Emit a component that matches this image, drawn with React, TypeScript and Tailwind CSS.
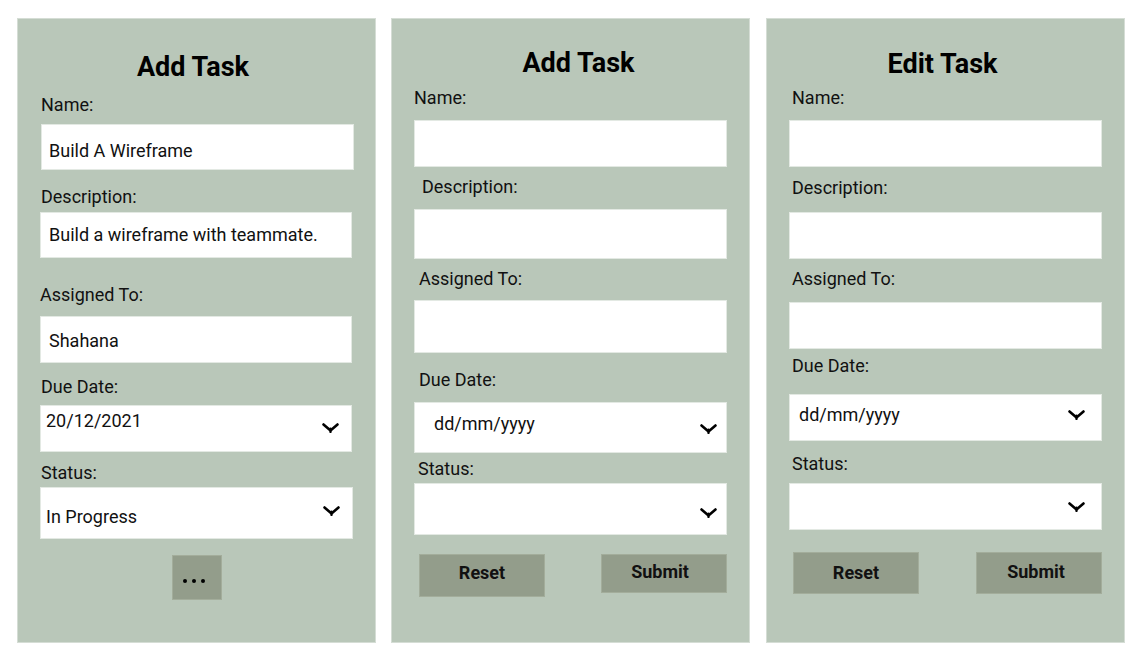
import React from 'react';

const Chevron: React.FC<{ className?: string }> = ({ className = '' }) => (
  <svg width="17" height="10" viewBox="0 0 17 10" className={className}>
    <path d="M1.5 1.5 L8.5 7.5 L15.5 1.5" fill="none" stroke="#000" strokeWidth="2.6" strokeLinecap="round" strokeLinejoin="round" />
    <path d="M8.5 5.5 L8.5 9" stroke="#000" strokeWidth="2.2" strokeLinecap="round" />
  </svg>
);

const Label: React.FC<{ text: string; className?: string }> = ({ text, className = '' }) => (
  <div className={`h-[20px] text-[18px] leading-[20px] text-[#111] ${className}`}>{text}</div>
);

const field = 'bg-white outline-1 -outline-offset-1 outline-[#e3e9e3] text-[18px] leading-[20px] text-[#111]';
const btn = 'bg-[#939d8b] outline-1 -outline-offset-1 outline-[#a3ad9b] text-center text-[18px] leading-[20px] font-bold text-[#111]';
const panel = 'w-[359px] h-[625px] bg-[#b9c7b9] outline-1 -outline-offset-1 outline-[#d5ddd5] flex flex-col';
const title = 'w-full text-center text-[27px] leading-[30px] font-bold text-black';

export default function App() {
  return (
    <div className="min-h-[664px] w-[1133px] bg-white pl-[17px] pt-[18px] flex gap-[15px] font-['Roboto',sans-serif]">
      {/* first add task, filled in */}
      <div className={`${panel} pt-[34px]`}>
        <div className={`${title} pr-[7px]`}>Add Task</div>
        <Label text="Name:" className="ml-[24px] mt-[13px]" />
        <div className={`${field} ml-[24px] mt-[9px] w-[313px] h-[46px] pl-[8px] pt-[17px]`}>Build A Wireframe</div>
        <Label text="Description:" className="ml-[24px] mt-[17px]" />
        <div className={`${field} ml-[23px] mt-[5px] w-[312px] h-[46px] pl-[9px] pt-[13px]`}>Build a wireframe with teammate.</div>
        <Label text="Assigned To:" className="ml-[23px] mt-[27px]" />
        <div className={`${field} ml-[23px] mt-[11px] w-[312px] h-[47px] pl-[9px] pt-[15px]`}>Shahana</div>
        <Label text="Due Date:" className="ml-[24px] mt-[14px]" />
        <div className={`${field} ml-[23px] mt-[8px] w-[312px] h-[47px] pl-[6px] pr-[13px] flex items-start justify-between`}>
          <span className="mt-[6px]">20/12/2021</span>
          <Chevron className="mt-[18px]" />
        </div>
        <Label text="Status:" className="ml-[24px] mt-[11px]" />
        <div className={`${field} ml-[23px] mt-[4px] w-[313px] h-[52px] pl-[6px] pr-[13px] flex items-start justify-between`}>
          <span className="mt-[20px]">In Progress</span>
          <Chevron className="mt-[19px]" />
        </div>
        <div className="self-center mt-[16px] w-[50px] h-[45px] bg-[#939d8b] outline-1 -outline-offset-1 outline-[#a3ad9b] flex items-center justify-center gap-[5px] pr-[5px] pt-[6px]">
          <span className="w-[4px] h-[4px] rounded-full bg-black" />
          <span className="w-[4px] h-[4px] rounded-full bg-black" />
          <span className="w-[4px] h-[4px] rounded-full bg-black" />
        </div>
      </div>

      {/* empty add task */}
      <div className={`${panel} pt-[30px]`}>
        <div className={`${title} pl-[16px]`}>Add Task</div>
        <Label text="Name:" className="ml-[23px] mt-[10px]" />
        <div className={`${field} ml-[23px] mt-[12px] w-[313px] h-[47px]`} />
        <Label text="Description:" className="ml-[31px] mt-[10px]" />
        <div className={`${field} ml-[23px] mt-[12px] w-[313px] h-[50px]`} />
        <Label text="Assigned To:" className="ml-[28px] mt-[10px]" />
        <div className={`${field} ml-[23px] mt-[11px] w-[313px] h-[53px]`} />
        <Label text="Due Date:" className="ml-[28px] mt-[17px]" />
        <div className={`${field} ml-[23px] mt-[12px] w-[313px] h-[51px] pl-[20px] pr-[10px] flex items-start justify-between`}>
          <span className="mt-[12px]">dd/mm/yyyy</span>
          <Chevron className="mt-[22px]" />
        </div>
        <Label text="Status:" className="ml-[27px] mt-[6px]" />
        <div className={`${field} ml-[23px] mt-[4px] w-[313px] h-[52px] pr-[10px] flex items-start justify-end`}>
          <Chevron className="mt-[25px]" />
        </div>
        <div className="ml-[23px] mt-[19px] w-[313px] flex items-start justify-between">
          <div className={`${btn} ml-[5px] w-[126px] h-[43px] pt-[9px]`}>Reset</div>
          <div className={`${btn} w-[126px] h-[39px] pt-[8px] pr-[8px]`}>Submit</div>
        </div>
      </div>

      {/* edit task */}
      <div className={`${panel} ml-[1px] pt-[31px]`}>
        <div className={`${title} pr-[6px]`}>Edit Task</div>
        <Label text="Name:" className="ml-[26px] mt-[9px]" />
        <div className={`${field} ml-[23px] mt-[12px] w-[313px] h-[47px]`} />
        <Label text="Description:" className="ml-[26px] mt-[11px]" />
        <div className={`${field} ml-[23px] mt-[14px] w-[313px] h-[47px]`} />
        <Label text="Assigned To:" className="ml-[26px] mt-[10px]" />
        <div className={`${field} ml-[23px] mt-[13px] w-[313px] h-[47px]`} />
        <Label text="Due Date:" className="ml-[26px] mt-[7px]" />
        <div className={`${field} ml-[23px] mt-[18px] w-[313px] h-[47px] pl-[10px] pr-[17px] flex items-start justify-between`}>
          <span className="mt-[11px]">dd/mm/yyyy</span>
          <Chevron className="mt-[16px]" />
        </div>
        <Label text="Status:" className="ml-[26px] mt-[13px]" />
        <div className={`${field} ml-[23px] mt-[9px] w-[313px] h-[47px] pr-[17px] flex items-start justify-end`}>
          <Chevron className="mt-[19px]" />
        </div>
        <div className="ml-[23px] mt-[22px] w-[313px] flex items-start justify-between">
          <div className={`${btn} ml-[4px] w-[126px] h-[42px] pt-[11px]`}>Reset</div>
          <div className={`${btn} w-[126px] h-[42px] pt-[10px] pr-[6px]`}>Submit</div>
        </div>
      </div>
    </div>
  );
}
